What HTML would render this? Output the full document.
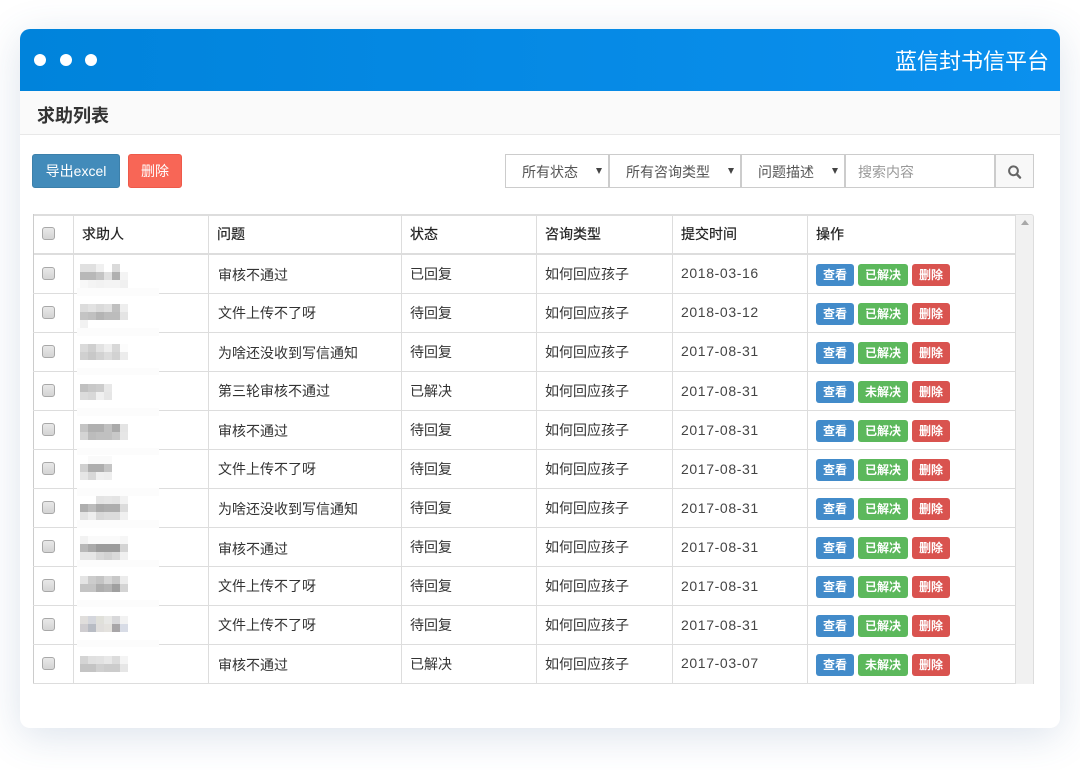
<!DOCTYPE html>
<html lang="zh"><head><meta charset="utf-8"><title>求助列表</title>
<style>
*{box-sizing:border-box}
html,body{margin:0;padding:0;width:1080px;height:770px;overflow:hidden;background:#fff;font-family:"Liberation Sans","Noto Sans CJK SC",sans-serif;color:#333}
.a,.a *{position:absolute}
#card{left:20px;top:29px;width:1040px;height:699px;border-radius:10px;background:#fff;box-shadow:0 8px 40px rgba(60,100,150,.18)}
#head{left:20px;top:29px;width:1040px;height:62px;border-radius:10px 10px 0 0;background:linear-gradient(90deg,#0083db,#0b90ee)}
.dot{width:12px;height:12px;border-radius:50%;background:#fff;top:54px}
#brand{left:895px;top:45px;font-size:22px;line-height:34px;color:#fff;white-space:nowrap}
#sub{left:20px;top:91px;width:1040px;height:44px;background:#fafafa;border-bottom:1px solid #e8e8e8}
#subt{left:37px;top:103px;font-size:18px;line-height:26px;font-weight:bold;color:#333;white-space:nowrap}
.btn{top:154px;height:34px;border-radius:3px;color:#fff;font-size:14px;line-height:32px;text-align:center;white-space:nowrap}
.sel{top:154px;height:34px;border:1px solid #ccc;background:#fff}
.t{font-size:14px;line-height:20px;white-space:nowrap}
.arr{top:168px;width:0;height:0;border-left:3px solid transparent;border-right:3px solid transparent;border-top:6px solid #444}
.ln{background:#ddd}
.cb{left:42px;width:13px;height:13px;border:1px solid #a8a8a8;border-radius:3px;background:linear-gradient(#e8e8e8,#d4d4d4)}
.r{left:33px;width:983px;height:40px;border-bottom:1px solid #ddd}
.b{height:22px;top:10px;border-radius:3px;color:#fff;font-size:12px;font-weight:bold;line-height:22px;text-align:center;white-space:nowrap}
.bl{left:783px;width:38px;background:#428bca}
.gr{left:825px;width:50px;background:#5cb85c}
.rd{left:879px;width:38px;background:#d9534f}
.q{left:185px}.s{left:377px}.c{left:512px}.d{left:648px;letter-spacing:.62px;color:#444}
.ht{top:224px;color:#222;-webkit-text-stroke:.2px #222}
</style></head><body>
<div class="a">
<div id="card"></div>
<div id="head"></div>
<div class="dot" style="left:34px"></div><div class="dot" style="left:60px"></div><div class="dot" style="left:85px"></div>
<div id="brand">蓝信封书信平台</div>
<div id="sub"></div><div id="subt">求助列表</div>

<div class="btn" style="left:32px;width:88px;background:#428bba;border:1px solid #3c80aa">导出excel</div>
<div class="btn" style="left:128px;width:54px;background:#f86656;border:1px solid #ee5a4a">删除</div>

<div class="sel" style="left:505px;width:104px"></div>
<div class="sel" style="left:609px;width:132px"></div>
<div class="sel" style="left:741px;width:104px"></div>
<div class="sel" style="left:845px;width:150px"></div>
<div class="sel" style="left:995px;width:39px;background:#f8f8f8"></div>
<div class="t" style="left:522px;top:162px;color:#555">所有状态</div>
<div class="t" style="left:626px;top:162px;color:#555">所有咨询类型</div>
<div class="t" style="left:758px;top:162px;color:#555">问题描述</div>
<div class="t" style="left:858px;top:162px;color:#999">搜索内容</div>
<div class="arr" style="left:596px"></div><div class="arr" style="left:728px"></div><div class="arr" style="left:832px"></div>
<svg style="left:1006px;top:164px" width="18" height="16" viewBox="0 0 18 16"><circle cx="7.5" cy="6.8" r="4.4" fill="none" stroke="#666" stroke-width="2"/><path d="M10.8 10.2L14 13.6" stroke="#666" stroke-width="2.4" stroke-linecap="round"/></svg>

<!-- table -->
<div style="left:33px;top:214px;width:1001px;height:470px;background:#fff;border-radius:3px 3px 0 0"></div>
<div style="left:1016px;top:214px;width:18px;height:470px;background:#f1f1f1;border-right:1px solid #ddd;border-top:1px solid #ddd;border-radius:0 3px 0 0"></div>
<div style="left:1021px;top:220px;width:0;height:0;border-left:4px solid transparent;border-right:4px solid transparent;border-bottom:5px solid #a8a8a8"></div>
<div class="ln" style="left:33px;top:214px;width:983px;height:2px"></div>
<div class="ln" style="left:33px;top:253px;width:983px;height:2px"></div>
<div class="ln" style="left:33px;top:214px;width:1px;height:470px;background:#ccc"></div>

<div class="r" style="top:254px"><div class="t q" style="top:11px">审核不通过</div><div class="t s" style="top:10px">已回复</div><div class="t c" style="top:10px">如何回应孩子</div><div class="t d" style="top:9px">2018-03-16</div><div class="b bl">查看</div><div class="b gr">已解决</div><div class="b rd">删除</div></div>
<div class="r" style="top:293px"><div class="t q" style="top:10px">文件上传不了呀</div><div class="t s" style="top:10px">待回复</div><div class="t c" style="top:10px">如何回应孩子</div><div class="t d" style="top:9px">2018-03-12</div><div class="b bl">查看</div><div class="b gr">已解决</div><div class="b rd">删除</div></div>
<div class="r" style="top:332px"><div class="t q" style="top:11px">为啥还没收到写信通知</div><div class="t s" style="top:10px">待回复</div><div class="t c" style="top:10px">如何回应孩子</div><div class="t d" style="top:9px">2017-08-31</div><div class="b bl">查看</div><div class="b gr">已解决</div><div class="b rd">删除</div></div>
<div class="r" style="top:371px"><div class="t q" style="top:10px">第三轮审核不通过</div><div class="t s" style="top:10px">已解决</div><div class="t c" style="top:10px">如何回应孩子</div><div class="t d" style="top:10px">2017-08-31</div><div class="b bl">查看</div><div class="b gr">未解决</div><div class="b rd">删除</div></div>
<div class="r" style="top:410px"><div class="t q" style="top:11px">审核不通过</div><div class="t s" style="top:10px">待回复</div><div class="t c" style="top:10px">如何回应孩子</div><div class="t d" style="top:10px">2017-08-31</div><div class="b bl">查看</div><div class="b gr">已解决</div><div class="b rd">删除</div></div>
<div class="r" style="top:449px"><div class="t q" style="top:10px">文件上传不了呀</div><div class="t s" style="top:10px">待回复</div><div class="t c" style="top:10px">如何回应孩子</div><div class="t d" style="top:10px">2017-08-31</div><div class="b bl">查看</div><div class="b gr">已解决</div><div class="b rd">删除</div></div>
<div class="r" style="top:488px"><div class="t q" style="top:11px">为啥还没收到写信通知</div><div class="t s" style="top:10px">待回复</div><div class="t c" style="top:10px">如何回应孩子</div><div class="t d" style="top:10px">2017-08-31</div><div class="b bl">查看</div><div class="b gr">已解决</div><div class="b rd">删除</div></div>
<div class="r" style="top:527px"><div class="t q" style="top:12px">审核不通过</div><div class="t s" style="top:10px">待回复</div><div class="t c" style="top:10px">如何回应孩子</div><div class="t d" style="top:10px">2017-08-31</div><div class="b bl">查看</div><div class="b gr">已解决</div><div class="b rd">删除</div></div>
<div class="r" style="top:566px"><div class="t q" style="top:10px">文件上传不了呀</div><div class="t s" style="top:10px">待回复</div><div class="t c" style="top:10px">如何回应孩子</div><div class="t d" style="top:10px">2017-08-31</div><div class="b bl">查看</div><div class="b gr">已解决</div><div class="b rd">删除</div></div>
<div class="r" style="top:605px"><div class="t q" style="top:10px">文件上传不了呀</div><div class="t s" style="top:10px">待回复</div><div class="t c" style="top:10px">如何回应孩子</div><div class="t d" style="top:10px">2017-08-31</div><div class="b bl">查看</div><div class="b gr">已解决</div><div class="b rd">删除</div></div>
<div class="r" style="top:644px"><div class="t q" style="top:11px">审核不通过</div><div class="t s" style="top:10px">已解决</div><div class="t c" style="top:10px">如何回应孩子</div><div class="t d" style="top:9px">2017-03-07</div><div class="b bl">查看</div><div class="b gr">未解决</div><div class="b rd">删除</div></div>

<div class="ln" style="left:73px;top:214px;width:1px;height:470px"></div>
<div class="ln" style="left:208px;top:214px;width:1px;height:470px"></div>
<div class="ln" style="left:401px;top:214px;width:1px;height:470px"></div>
<div class="ln" style="left:536px;top:214px;width:1px;height:470px"></div>
<div class="ln" style="left:672px;top:214px;width:1px;height:470px"></div>
<div class="ln" style="left:807px;top:214px;width:1px;height:470px"></div>
<div class="ln" style="left:1015px;top:214px;width:1px;height:470px"></div>

<div class="t ht" style="left:82px">求助人</div>
<div class="t ht" style="left:217px">问题</div>
<div class="t ht" style="left:410px">状态</div>
<div class="t ht" style="left:545px">咨询类型</div>
<div class="t ht" style="left:681px">提交时间</div>
<div class="t ht" style="left:816px">操作</div>

<div class="cb" style="top:227px"></div><div class="cb" style="top:267px"></div><div class="cb" style="top:306px"></div><div class="cb" style="top:345px"></div><div class="cb" style="top:384px"></div><div class="cb" style="top:423px"></div><div class="cb" style="top:462px"></div><div class="cb" style="top:501px"></div><div class="cb" style="top:540px"></div><div class="cb" style="top:579px"></div><div class="cb" style="top:618px"></div><div class="cb" style="top:657px"></div>

<svg style="left:0;top:0" width="1080" height="770" shape-rendering="crispEdges">
<g fill="#fcfcfc"><rect x="77" y="288" width="82" height="8"/><rect x="77" y="328" width="82" height="8"/><rect x="77" y="368" width="82" height="7"/><rect x="77" y="408" width="82" height="8"/><rect x="77" y="448" width="82" height="7"/><rect x="77" y="488" width="82" height="8"/><rect x="77" y="520" width="82" height="8"/><rect x="77" y="560" width="82" height="7"/><rect x="77" y="600" width="82" height="7"/><rect x="77" y="640" width="82" height="7"/></g>
<g id="m">
<rect x="80" y="264" width="8" height="8" fill="#e0e0e0"/><rect x="88" y="264" width="8" height="8" fill="#e0e0e0"/><rect x="96" y="264" width="8" height="8" fill="#f0f0f0"/><rect x="112" y="264" width="8" height="8" fill="#dadada"/>
<rect x="80" y="272" width="8" height="8" fill="#b8b8b8"/><rect x="88" y="272" width="8" height="8" fill="#b8b8b8"/><rect x="96" y="272" width="8" height="8" fill="#c4c4c4"/><rect x="104" y="272" width="8" height="8" fill="#e0e0e0"/><rect x="112" y="272" width="8" height="8" fill="#b0b0b0"/><rect x="120" y="272" width="8" height="8" fill="#f4f4f4"/>
<rect x="80" y="280" width="8" height="8" fill="#f8f8f8"/><rect x="88" y="280" width="8" height="8" fill="#f4f4f4"/><rect x="96" y="280" width="8" height="8" fill="#f2f2f2"/><rect x="104" y="280" width="8" height="8" fill="#f4f4f4"/><rect x="112" y="280" width="8" height="8" fill="#f4f4f4"/><rect x="120" y="280" width="8" height="8" fill="#f0f0f0"/>

<rect x="80" y="304" width="8" height="8" fill="#dcdcdc"/><rect x="88" y="304" width="8" height="8" fill="#e2e2e2"/><rect x="96" y="304" width="8" height="8" fill="#dadada"/><rect x="104" y="304" width="8" height="8" fill="#e0e0e0"/><rect x="112" y="304" width="8" height="8" fill="#c0c0c0"/><rect x="120" y="304" width="8" height="8" fill="#eeeeee"/>
<rect x="80" y="312" width="8" height="8" fill="#c4c4c4"/><rect x="88" y="312" width="8" height="8" fill="#c0c0c0"/><rect x="96" y="312" width="8" height="8" fill="#b4b4b4"/><rect x="104" y="312" width="8" height="8" fill="#bcbcbc"/><rect x="112" y="312" width="8" height="8" fill="#bcbcbc"/><rect x="120" y="312" width="8" height="8" fill="#e4e4e4"/>
<rect x="80" y="320" width="8" height="8" fill="#f2f2f2"/>

<rect x="80" y="344" width="8" height="8" fill="#dadada"/><rect x="88" y="344" width="8" height="8" fill="#cfcfcf"/><rect x="96" y="344" width="8" height="8" fill="#e2e2e2"/><rect x="104" y="344" width="8" height="8" fill="#eeeeee"/><rect x="112" y="344" width="8" height="8" fill="#d8d8d8"/><rect x="120" y="344" width="8" height="8" fill="#fcfcfc"/>
<rect x="80" y="352" width="8" height="8" fill="#d0d0d0"/><rect x="88" y="352" width="8" height="8" fill="#c8c8c8"/><rect x="96" y="352" width="8" height="8" fill="#d2d2d2"/><rect x="104" y="352" width="8" height="8" fill="#dcdcdc"/><rect x="112" y="352" width="8" height="8" fill="#d2d2d2"/><rect x="120" y="352" width="8" height="8" fill="#ececec"/>

<rect x="80" y="384" width="8" height="8" fill="#c0c0c0"/><rect x="88" y="384" width="8" height="8" fill="#c8c8c8"/><rect x="96" y="384" width="8" height="8" fill="#cccccc"/><rect x="104" y="384" width="8" height="8" fill="#e8e8e8"/>
<rect x="80" y="392" width="8" height="8" fill="#dcdcdc"/><rect x="88" y="392" width="8" height="8" fill="#d8d8d8"/><rect x="96" y="392" width="8" height="8" fill="#f0f0f0"/><rect x="104" y="392" width="8" height="8" fill="#e6e6e6"/>

<rect x="80" y="424" width="8" height="8" fill="#c4c4c4"/><rect x="88" y="424" width="8" height="8" fill="#b0b0b0"/><rect x="96" y="424" width="8" height="8" fill="#b0b0b0"/><rect x="104" y="424" width="8" height="8" fill="#c0c0c0"/><rect x="112" y="424" width="8" height="8" fill="#aaaaaa"/><rect x="120" y="424" width="8" height="8" fill="#e4e4e4"/>
<rect x="80" y="432" width="8" height="8" fill="#d4d4d4"/><rect x="88" y="432" width="8" height="8" fill="#bcbcbc"/><rect x="96" y="432" width="8" height="8" fill="#c0c0c0"/><rect x="104" y="432" width="8" height="8" fill="#c0c0c0"/><rect x="112" y="432" width="8" height="8" fill="#c8c8c8"/><rect x="120" y="432" width="8" height="8" fill="#e6e6e6"/>

<rect x="88" y="456" width="24" height="8" fill="#fafafa"/>
<rect x="80" y="464" width="8" height="8" fill="#d0d0d0"/><rect x="88" y="464" width="8" height="8" fill="#aeaeae"/><rect x="96" y="464" width="8" height="8" fill="#aeaeae"/><rect x="104" y="464" width="8" height="8" fill="#c4c4c4"/>
<rect x="80" y="472" width="8" height="8" fill="#e6e6e6"/><rect x="88" y="472" width="8" height="8" fill="#d8d8d8"/><rect x="96" y="472" width="8" height="8" fill="#f0f0f0"/><rect x="104" y="472" width="8" height="8" fill="#eeeeee"/>

<rect x="96" y="496" width="8" height="8" fill="#e4e4e4"/><rect x="104" y="496" width="8" height="8" fill="#e6e6e6"/><rect x="112" y="496" width="8" height="8" fill="#e4e4e4"/><rect x="120" y="496" width="8" height="8" fill="#f2f2f2"/>
<rect x="80" y="504" width="8" height="8" fill="#aeaeae"/><rect x="88" y="504" width="8" height="8" fill="#bcbcbc"/><rect x="96" y="504" width="8" height="8" fill="#aaaaaa"/><rect x="104" y="504" width="8" height="8" fill="#aeaeae"/><rect x="112" y="504" width="8" height="8" fill="#aeaeae"/><rect x="120" y="504" width="8" height="8" fill="#dcdcdc"/>
<rect x="80" y="512" width="8" height="8" fill="#e4e4e4"/><rect x="88" y="512" width="8" height="8" fill="#eeeeee"/><rect x="96" y="512" width="8" height="8" fill="#d8d8d8"/><rect x="104" y="512" width="8" height="8" fill="#dcdcdc"/><rect x="112" y="512" width="8" height="8" fill="#dcdcdc"/><rect x="120" y="512" width="8" height="8" fill="#f0f0f0"/>

<rect x="80" y="536" width="8" height="8" fill="#f2f2f2"/><rect x="88" y="536" width="32" height="8" fill="#fafafa"/><rect x="120" y="536" width="8" height="8" fill="#f6f6f6"/>
<rect x="80" y="544" width="8" height="8" fill="#b8b8b8"/><rect x="88" y="544" width="8" height="8" fill="#aaaaaa"/><rect x="96" y="544" width="8" height="8" fill="#9c9c9c"/><rect x="104" y="544" width="8" height="8" fill="#9c9c9c"/><rect x="112" y="544" width="8" height="8" fill="#9c9c9c"/><rect x="120" y="544" width="8" height="8" fill="#d4d4d4"/>
<rect x="80" y="552" width="8" height="8" fill="#e6e6e6"/><rect x="88" y="552" width="8" height="8" fill="#e6e6e6"/><rect x="96" y="552" width="8" height="8" fill="#d8d8d8"/><rect x="104" y="552" width="8" height="8" fill="#d2d2d2"/><rect x="112" y="552" width="8" height="8" fill="#dadada"/><rect x="120" y="552" width="8" height="8" fill="#f0f0f0"/>

<rect x="80" y="576" width="8" height="8" fill="#e4e4e4"/><rect x="88" y="576" width="8" height="8" fill="#cccccc"/><rect x="96" y="576" width="8" height="8" fill="#c4c4c4"/><rect x="104" y="576" width="8" height="8" fill="#d6d6d6"/><rect x="112" y="576" width="8" height="8" fill="#c8c8c8"/><rect x="120" y="576" width="8" height="8" fill="#ececec"/>
<rect x="80" y="584" width="8" height="8" fill="#c4c4c4"/><rect x="88" y="584" width="8" height="8" fill="#c4c4c4"/><rect x="96" y="584" width="8" height="8" fill="#aeaeae"/><rect x="104" y="584" width="8" height="8" fill="#b4b4b4"/><rect x="112" y="584" width="8" height="8" fill="#a0a0a0"/><rect x="120" y="584" width="8" height="8" fill="#d4d4d4"/>

<rect x="80" y="616" width="8" height="8" fill="#e0dedc"/><rect x="88" y="616" width="8" height="8" fill="#d4d6dc"/><rect x="96" y="616" width="8" height="8" fill="#e0e0da"/><rect x="104" y="616" width="8" height="8" fill="#e8e8e6"/><rect x="112" y="616" width="8" height="8" fill="#d8d8da"/><rect x="120" y="616" width="8" height="8" fill="#f2f2f2"/>
<rect x="80" y="624" width="8" height="8" fill="#cfcdd0"/><rect x="88" y="624" width="8" height="8" fill="#b8bcc4"/><rect x="96" y="624" width="8" height="8" fill="#e0dedc"/><rect x="104" y="624" width="8" height="8" fill="#e4e2de"/><rect x="112" y="624" width="8" height="8" fill="#a8a6a8"/><rect x="120" y="624" width="8" height="8" fill="#d8dce6"/>

<rect x="80" y="656" width="8" height="8" fill="#d4d4d4"/><rect x="88" y="656" width="8" height="8" fill="#e0e0e0"/><rect x="96" y="656" width="8" height="8" fill="#e2e2e2"/><rect x="104" y="656" width="8" height="8" fill="#e8e8e8"/><rect x="112" y="656" width="8" height="8" fill="#dcdcdc"/><rect x="120" y="656" width="8" height="8" fill="#f4f4f4"/>
<rect x="80" y="664" width="8" height="8" fill="#c4c4c4"/><rect x="88" y="664" width="8" height="8" fill="#c4c4c4"/><rect x="96" y="664" width="8" height="8" fill="#d0d0d0"/><rect x="104" y="664" width="8" height="8" fill="#cccccc"/><rect x="112" y="664" width="8" height="8" fill="#cccccc"/><rect x="120" y="664" width="8" height="8" fill="#e6e6e6"/>
</g></svg>
</div>
</body></html>
